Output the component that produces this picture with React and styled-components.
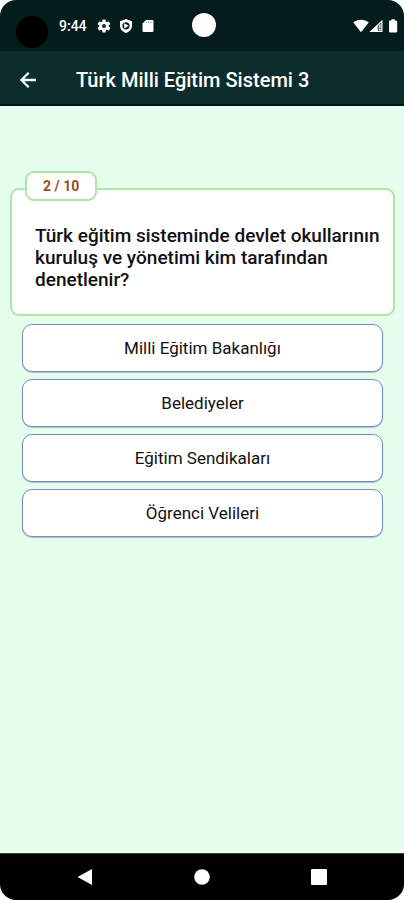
import React from "react";
import styled, { createGlobalStyle } from "styled-components";

const GlobalStyle = createGlobalStyle`
  * { box-sizing: border-box; }
  body {
    margin: 0;
    background: #ffffff;
    font-family: Roboto, "Noto Sans", sans-serif;
  }
  button { font-family: inherit; cursor: pointer; }
`;

const Screen = styled.div`
  display: flex;
  flex-direction: column;
  min-height: 100vh;
  overflow: hidden;
  border-radius: 16px;
  background: #e5ffec;
`;

const StatusBar = styled.div`
  display: grid;
  grid-template-columns: 1fr auto 1fr;
  align-items: center;
  height: 51px;
  padding: 0 5px 0 16px;
  background: #051c1c;
  color: #ffffff;
`;

const StatusGroup = styled.div`
  display: flex;
  align-items: center;
  justify-content: ${(p) => (p.$end ? "flex-end" : "flex-start")};
  gap: ${(p) => (p.$end ? "0" : "8px")};
  height: 51px;
`;

const Camera = styled.span`
  width: 32px;
  height: 32px;
  margin: 12px 3px 0 0;
  border-radius: 50%;
  background: #000000;
`;

const Clock = styled.time`
  margin-right: 2px;
  font-size: 14px;
  line-height: 20px;
  font-weight: 500;
`;

const CenterDot = styled.span`
  width: 24px;
  height: 24px;
  margin: 0 8px 2px 0;
  border-radius: 50%;
  background: #ffffff;
`;

const AppBar = styled.header`
  display: flex;
  align-items: center;
  gap: 36px;
  height: 55px;
  padding: 4px 16px 0;
  border-bottom: 2px solid #051010;
  background: #0d2d2d;
  color: #ffffff;
`;

const BackButton = styled.button`
  display: flex;
  padding: 0;
  border: 0;
  background: none;
  color: inherit;
`;

const Title = styled.h1`
  margin: 0;
  font-size: 20px;
  line-height: 24px;
  font-weight: 500;
`;

const Quiz = styled.main`
  flex: 1;
  padding: 82px 9px 24px 10px;
`;

const QuestionCard = styled.section`
  position: relative;
  min-height: 128px;
  padding: 35px 8px 23px 23px;
  border: 2px solid #a9e7a4;
  border-radius: 9px;
  background: #ffffff;
`;

const Counter = styled.div`
  position: absolute;
  top: -19px;
  left: 13px;
  padding: 3px 16px;
  border: 2px solid #a9e7a4;
  border-radius: 9px;
  background: #ffffff;
  color: #94511f;
  font-size: 14px;
  line-height: 20px;
  font-weight: 700;
`;

const Question = styled.h2`
  margin: 0;
  color: #111111;
  font-size: 19px;
  line-height: 22px;
  font-weight: 500;
`;

const Options = styled.div`
  display: flex;
  flex-direction: column;
  gap: 7px;
  padding: 8px 12px 0;
`;

const Option = styled.button`
  height: 48px;
  padding: 0 16px;
  border: 1px solid #738fc4;
  border-radius: 10px;
  background: #ffffff;
  box-shadow: 0 1px 1px #a9bcd0;
  color: #111111;
  font-size: 17px;
  line-height: 24px;
  font-weight: 400;
`;

const NavBar = styled.nav`
  display: flex;
  align-items: center;
  justify-content: space-between;
  height: 47px;
  padding: 0 76px;
  border-top: 1px solid #34403a;
  background: #000000;
`;

const NavButton = styled.button`
  display: flex;
  padding: 0;
  border: 0;
  background: none;
`;

const Glyph = styled.svg`
  display: block;
  flex: none;
`;

const options = [
  "Milli Eğitim Bakanlığı",
  "Belediyeler",
  "Eğitim Sendikaları",
  "Öğrenci Velileri",
];

const gearTeeth = [0, 60, 120, 180, 240, 300];

function GearIcon() {
  return (
    <Glyph width="14" height="14" viewBox="0 0 14 14" fill="#fff">
      {gearTeeth.map((a) => (
        <rect key={a} x="5.3" y="0.5" width="3.4" height="4" rx="0.6" transform={`rotate(${a} 7 7)`} />
      ))}
      <path fillRule="evenodd" d="M7 2.2a4.8 4.8 0 1 0 0 9.6a4.8 4.8 0 0 0 0-9.6zM7 5.1a1.9 1.9 0 1 1 0 3.8a1.9 1.9 0 0 1 0-3.8z" />
    </Glyph>
  );
}

function ShieldIcon() {
  return (
    <Glyph width="14" height="14" viewBox="0 0 14 14">
      <path fill="#fff" d="M7 0L13 2.2V6.6C13 10.2 10.6 13 7 14C3.4 13 1 10.2 1 6.6V2.2z" />
      <circle cx="7" cy="6.8" r="3.6" fill="#051c1c" />
      <path d="M5.2 4.2L9.8 6.8L5.2 9.4z" fill="#fff" />
    </Glyph>
  );
}

function CardIcon() {
  return (
    <Glyph width="14" height="14" viewBox="0 0 14 14">
      <path fill="#fff" d="M5 1H11.2Q12.5 1 12.5 2.3V11.7Q12.5 13 11.2 13H2.8Q1.5 13 1.5 11.7V4.5z" />
      <path d="M5.2 2.5v1.5M7.6 2.5v1.5M10 2.5v1.5" stroke="#9aa5a3" strokeWidth="1" />
    </Glyph>
  );
}

export default function App() {
  return (
    <>
      <GlobalStyle />
      <Screen>
        <StatusBar>
          <StatusGroup>
            <Camera />
            <Clock>9:44</Clock>
            <GearIcon />
            <ShieldIcon />
            <CardIcon />
          </StatusGroup>
          <CenterDot />
          <StatusGroup $end>
            <Glyph width="16" height="14" viewBox="0 0 16 14" fill="#fff">
              <path d="M0.3 3.5C4.5 -0.2 11.5 -0.2 15.7 3.5L8 13.3z" />
            </Glyph>
            <Glyph width="14" height="14" viewBox="0 0 14 14">
              <path d="M13.5 0.7V13H0.3z" fill="#fff" />
              <path d="M8.6 6.8L12.3 3.2V11.8H8.6z" fill="#576665" />
              <path d="M10.9 5.5v3.2M10.9 9.8v1.4" stroke="#fff" strokeWidth="1.2" />
            </Glyph>
            <Glyph width="16" height="14" viewBox="0 0 16 14" fill="#fff">
              <path d="M8.5 0.2h3.2v1.2h1.3q1.2 0 1.2 1.2v9.6q0 1.4-1.4 1.4H7.4Q6 13.6 6 12.2V2.6q0-1.2 1.2-1.2h1.3z" />
            </Glyph>
          </StatusGroup>
        </StatusBar>
        <AppBar>
          <BackButton type="button" aria-label="Geri">
            <Glyph width="24" height="24" viewBox="0 0 24 24" fill="none" stroke="#fff" strokeWidth="2.3">
              <path d="M20 12H5.5M12.7 4.7L5.4 12l7.3 7.3" />
            </Glyph>
          </BackButton>
          <Title>Türk Milli Eğitim Sistemi 3</Title>
        </AppBar>
        <Quiz>
          <QuestionCard>
            <Counter>2 / 10</Counter>
            <Question>
              Türk eğitim sisteminde devlet okullarının kuruluş ve yönetimi kim tarafından denetlenir?
            </Question>
          </QuestionCard>
          <Options>
            {options.map((label) => (
              <Option type="button" key={label}>{label}</Option>
            ))}
          </Options>
        </Quiz>
        <NavBar>
          <NavButton type="button" aria-label="Geri">
            <Glyph width="18" height="18" viewBox="0 0 18 18" fill="#fff">
              <path d="M16 1V17L1.5 9z" />
            </Glyph>
          </NavButton>
          <NavButton type="button" aria-label="Ana ekran">
            <Glyph width="18" height="18" viewBox="0 0 18 18" fill="#fff">
              <circle cx="9" cy="9" r="7.8" />
            </Glyph>
          </NavButton>
          <NavButton type="button" aria-label="Son uygulamalar">
            <Glyph width="18" height="18" viewBox="0 0 18 18" fill="#fff">
              <rect x="1" y="1" width="16" height="16" rx="1" />
            </Glyph>
          </NavButton>
        </NavBar>
      </Screen>
    </>
  );
}
